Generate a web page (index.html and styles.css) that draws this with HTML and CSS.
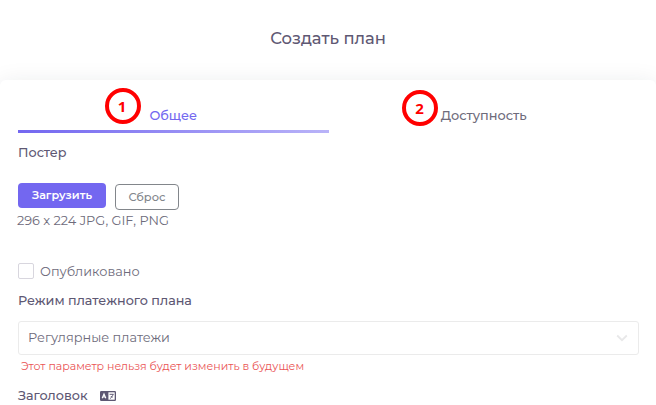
FILE: index.html
```html
<!DOCTYPE html>
<html lang="ru">
<head>
    <meta charset="UTF-8">
    <meta name="viewport" content="width=device-width, initial-scale=1.0">
    <title>Создать план</title>
    <link rel="stylesheet" href="styles.css">
</head>
<body>
    <header class="header">
        <h1 class="title">Создать план</h1>
    </header>
    <main class="card">
        <nav class="tabs">
            <a class="tab active"><span class="marker marker-1">1</span>Общее</a>
            <a class="tab"><span class="marker marker-2">2</span>Доступность</a>
        </nav>
        <div class="label poster">Постер</div>
        <div class="buttons">
            <button class="btn btn-primary">Загрузить</button>
            <button class="btn btn-outline">Сброс</button>
        </div>
        <div class="hint">296 x 224 JPG, GIF, PNG</div>
        <label class="check">
            <input type="checkbox" class="check-input">
            <span class="check-text">Опубликовано</span>
        </label>
        <div class="label mode">Режим платежного плана</div>
        <div class="select">
            <span class="select-text">Регулярные платежи</span>
            <svg class="chevron" width="12" height="8" viewBox="0 0 12 8" fill="none" stroke="#e8e8e9" stroke-width="1.8">
                <path d="M1.2 1.5 6 6.2 10.8 1.5"/>
            </svg>
        </div>
        <div class="error">Этот параметр нельзя будет изменить в будущем</div>
        <div class="label heading">
            <span>Заголовок</span>
            <svg class="lang" width="16" height="10" viewBox="0 0 16 10">
                <rect width="16" height="10" rx="1.2" fill="#5e5873"/>
                <path d="M8.4 1.3h6.3v7.4H8.4z" fill="#fff"/>
                <path d="M2.2 7.2 4 3l1.8 4.2M3 6h2" fill="none" stroke="#fff" stroke-width="1.2"/>
                <path d="M9.6 3.3h4M13 3.3c-.3 1.8-1.4 3.2-2.8 4.2M10.8 5l1.5 1.5" fill="none" stroke="#5e5873" stroke-width="1"/>
            </svg>
        </div>
    </main>
</body>
</html>
```
FILE: styles.css
```css
* {
    box-sizing: border-box;
}
html, body {
    margin: 0;
    padding: 0;
    height: 100vh;
    overflow: hidden;
}
body {
    display: flex;
    flex-direction: column;
    font-family: Montserrat, Inter, "Noto Sans", sans-serif;
    font-size: 12.85px;
    line-height: 18px;
    color: #6e6b7b;
    background-color: #fff;
}
.header {
    height: 80px;
    flex-shrink: 0;
    display: flex;
    justify-content: center;
    padding-top: 27px;
}
.title {
    margin: 0;
    font-size: 16.4px;
    line-height: 22px;
    font-weight: 500;
    color: #5e5873;
}
.card {
    flex: 1 0 345px;
    padding: 0 17px 0 18px;
    background-color: #fff;
    border-radius: 6px;
    box-shadow: 0 4px 24px rgba(34, 41, 47, 0.1);
}
.tabs {
    display: flex;
    height: 53px;
}
.tab {
    position: relative;
    flex: 1;
    display: flex;
    justify-content: center;
    padding-top: 27px;
    font-weight: 500;
}
.tab.active {
    color: #7367f0;
}
.tab.active::after {
    content: "";
    position: absolute;
    left: 0;
    right: 0;
    bottom: 0;
    height: 3px;
    background: linear-gradient(to right, #7367f0, #b9b3f8);
}
.marker {
    position: absolute;
    display: flex;
    align-items: center;
    justify-content: center;
    width: 36px;
    height: 36px;
    border: 4px solid #f00;
    border-radius: 50%;
    font-family: "Open Sans", sans-serif;
    font-size: 15px;
    font-weight: 700;
    color: #f00;
}
.marker-1 {
    left: 87px;
    top: 8px;
    padding-right: 2px;
}
.marker-2 {
    left: 73px;
    top: 10px;
}
.label {
    font-weight: 500;
    font-size: 12.75px;
    color: #5e5873;
}
.poster {
    margin-top: 11px;
}
.buttons {
    display: flex;
    gap: 9px;
    margin-top: 21px;
}
.btn {
    padding: 0 0 1px;
    font-family: inherit;
    font-size: 11.2px;
    line-height: 14px;
    border-radius: 4px;
    cursor: pointer;
}
.btn-primary {
    width: 88px;
    height: 25px;
    border: none;
    font-weight: 600;
    color: #fff;
    background-color: #7367f0;
}
.btn-outline {
    width: 64px;
    height: 26px;
    margin-top: 1px;
    border: 1px solid #82868b;
    font-size: 11.4px;
    font-weight: 500;
    color: #82868b;
    background-color: #fff;
}
.hint {
    margin-top: 2px;
    margin-left: -1px;
}
.check {
    display: flex;
    align-items: center;
    gap: 6px;
    margin-top: 32px;
}
.check-text {
    margin-top: 1px;
    margin-bottom: -1px;
}
.check-input {
    appearance: none;
    width: 16px;
    height: 16px;
    margin: 0;
    border: 1px solid #d8d6de;
    border-radius: 2px;
    background-color: #fff;
}
.mode {
    margin-top: 12px;
}
.select {
    display: flex;
    align-items: center;
    justify-content: space-between;
    height: 34px;
    margin-top: 11px;
    padding: 0 10px 0 9px;
    border: 1px solid #ebebeb;
    border-radius: 3px;
}
.error {
    margin-top: 2px;
    padding-left: 3px;
    font-size: 11px;
    color: #ea5455;
}
.heading {
    display: flex;
    align-items: center;
    gap: 12px;
    margin-top: 12px;
}
```
